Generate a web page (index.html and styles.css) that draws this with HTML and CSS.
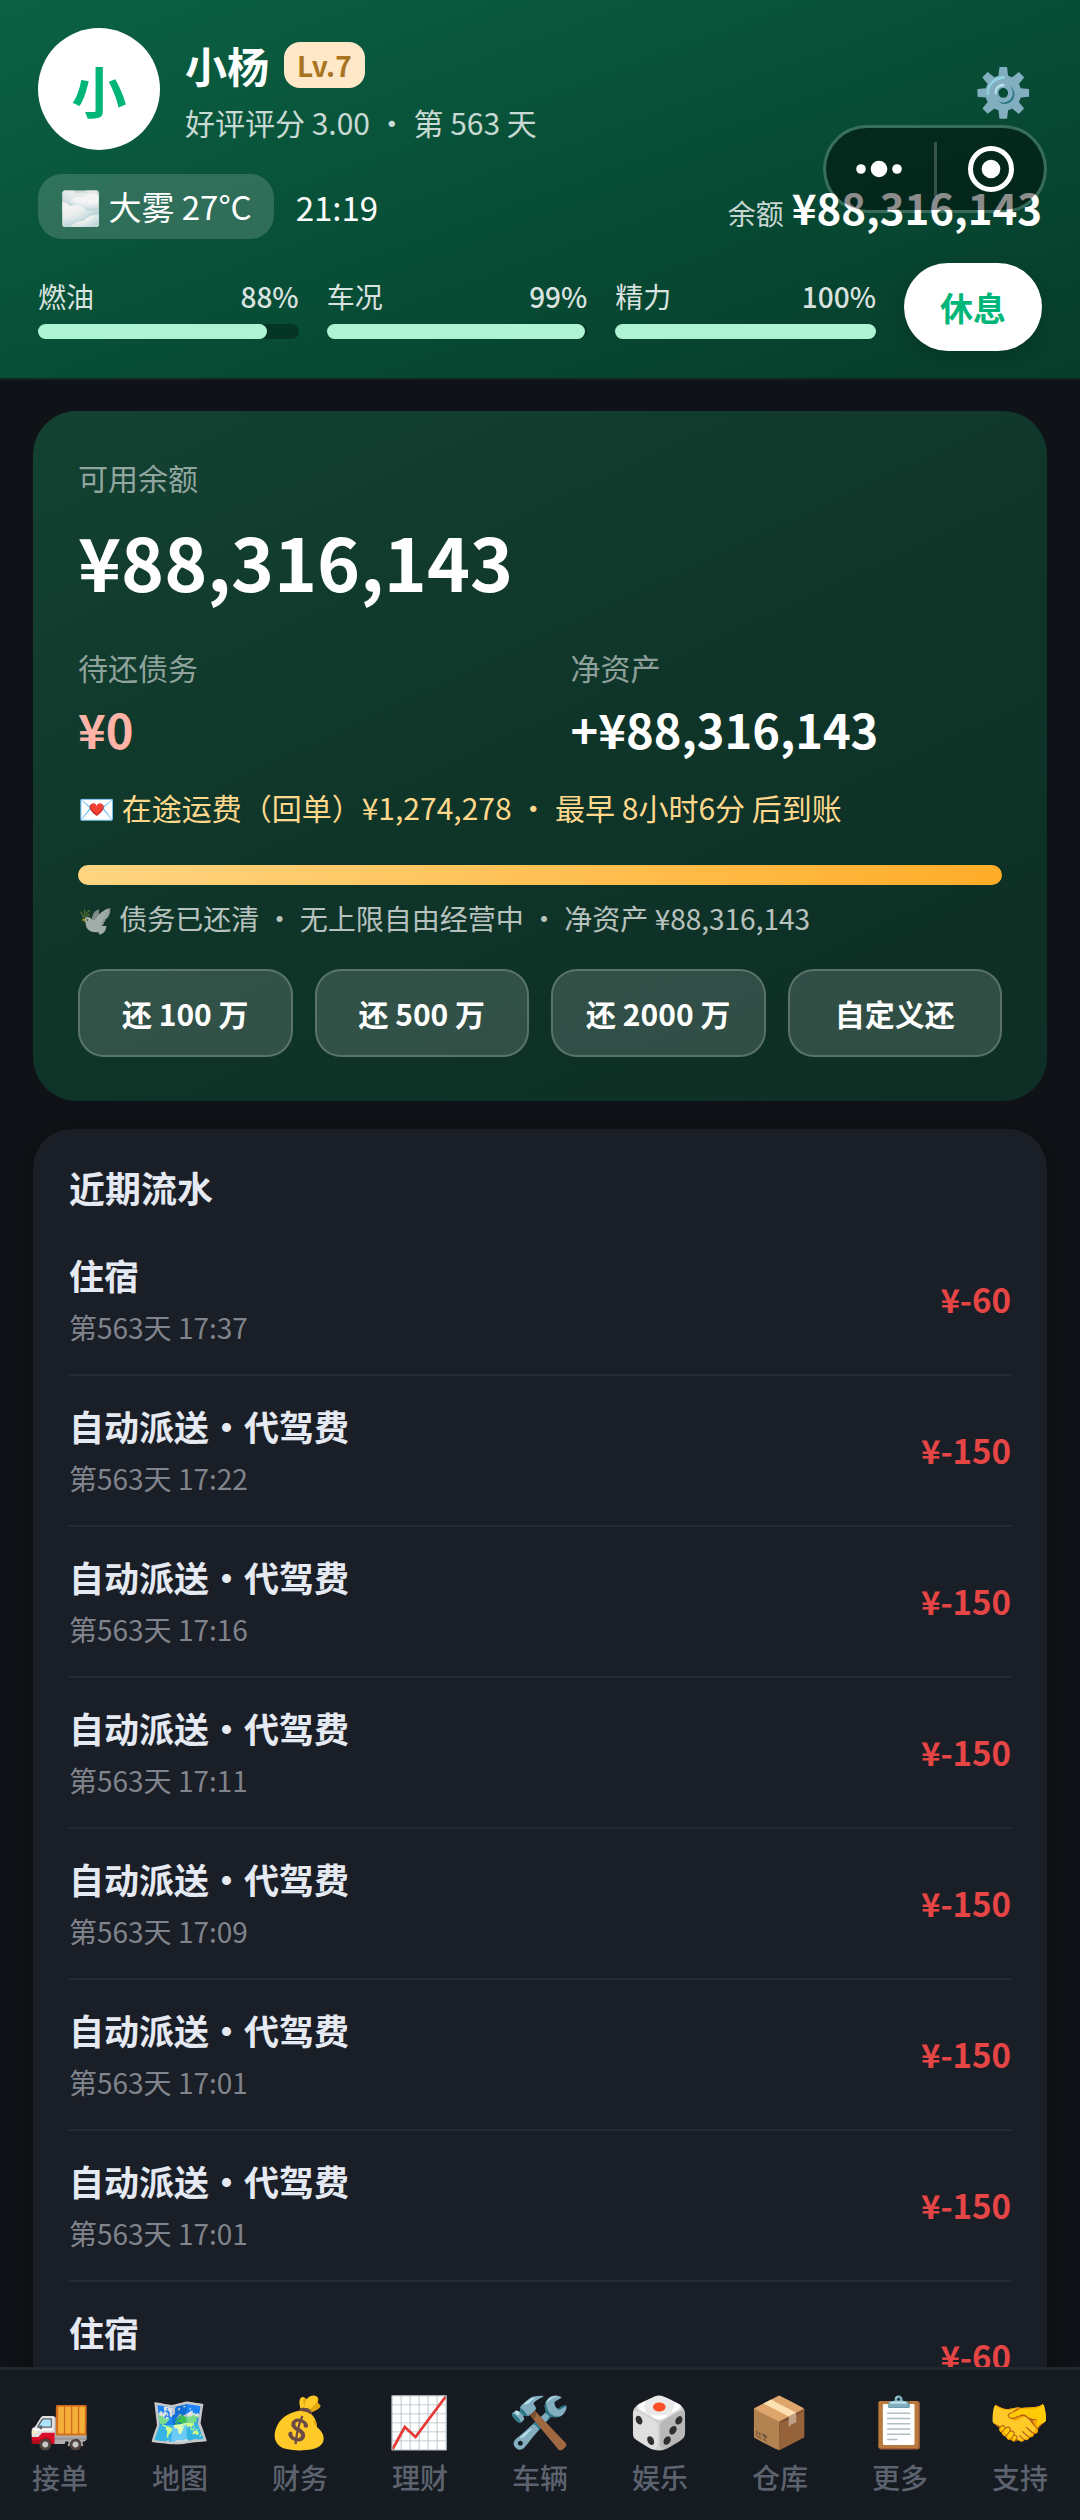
FILE: index.html
```html
<!DOCTYPE html>
<html lang="zh-CN">
<head>
<meta charset="utf-8">
<meta name="viewport" content="width=device-width, initial-scale=1">
<title>财务</title>
<link rel="stylesheet" href="styles.css">
</head>
<body>
<header class="header">
  <div class="profile">
    <div class="avatar">小</div>
    <div class="profile-info">
      <div class="name-row">
        <h1 class="name">小杨</h1>
        <span class="level">Lv.7</span>
      </div>
      <p class="rating">好评评分 3.00 · 第 563 天</p>
    </div>
    <button class="settings" type="button" aria-label="设置">⚙️</button>
  </div>
  <div class="status">
    <span class="weather">🌫️ 大雾 27°C</span>
    <time class="clock">21:19</time>
    <p class="balance"><span class="balance-label">余额</span> <strong class="balance-value">¥88,316,143</strong></p>
  </div>
  <div class="stats">
    <div class="stat">
      <div class="stat-head"><span>燃油</span><span class="stat-value">88%</span></div>
      <div class="track"><div class="fill" style="width: 88%"></div></div>
    </div>
    <div class="stat">
      <div class="stat-head"><span>车况</span><span class="stat-value">99%</span></div>
      <div class="track"><div class="fill" style="width: 99%"></div></div>
    </div>
    <div class="stat">
      <div class="stat-head"><span>精力</span><span class="stat-value">100%</span></div>
      <div class="track"><div class="fill" style="width: 100%"></div></div>
    </div>
    <button class="rest" type="button">休息</button>
  </div>
  <div class="capsule">
    <button class="capsule-button" type="button" aria-label="菜单">
      <svg width="48" height="48" viewBox="0 0 48 48" fill="#fff"><circle cx="5" cy="24" r="4.8"/><circle cx="23" cy="24" r="8.3"/><circle cx="41" cy="24" r="4.8"/></svg>
    </button>
    <span class="capsule-divider"></span>
    <button class="capsule-button" type="button" aria-label="关闭">
      <svg width="48" height="48" viewBox="0 0 48 48"><circle cx="25" cy="24" r="20.5" fill="none" stroke="#fff" stroke-width="5"/><circle cx="25" cy="24" r="9.3" fill="#fff"/></svg>
    </button>
  </div>
</header>

<main class="content">
  <section class="wallet">
    <p class="label">可用余额</p>
    <p class="total">¥88,316,143</p>
    <div class="columns">
      <div>
        <p class="label">待还债务</p>
        <p class="amount debt">¥0</p>
      </div>
      <div>
        <p class="label">净资产</p>
        <p class="amount">+¥88,316,143</p>
      </div>
    </div>
    <p class="transit">💌 在途运费（回单）¥1,274,278 · 最早 8小时6分 后到账</p>
    <div class="progress"></div>
    <p class="note">🕊️ 债务已还清 · 无上限自由经营中 · 净资产 ¥88,316,143</p>
    <div class="repay">
      <button class="repay-button" type="button">还 100 万</button>
      <button class="repay-button" type="button">还 500 万</button>
      <button class="repay-button" type="button">还 2000 万</button>
      <button class="repay-button" type="button">自定义还</button>
    </div>
  </section>

  <section class="history">
    <h2 class="history-title">近期流水</h2>
    <ul class="records">
      <li class="record"><div class="record-info"><p class="record-name">住宿</p><p class="record-time">第563天 17:37</p></div><span class="record-amount">¥-60</span></li>
      <li class="record"><div class="record-info"><p class="record-name">自动派送·代驾费</p><p class="record-time">第563天 17:22</p></div><span class="record-amount">¥-150</span></li>
      <li class="record"><div class="record-info"><p class="record-name">自动派送·代驾费</p><p class="record-time">第563天 17:16</p></div><span class="record-amount">¥-150</span></li>
      <li class="record"><div class="record-info"><p class="record-name">自动派送·代驾费</p><p class="record-time">第563天 17:11</p></div><span class="record-amount">¥-150</span></li>
      <li class="record"><div class="record-info"><p class="record-name">自动派送·代驾费</p><p class="record-time">第563天 17:09</p></div><span class="record-amount">¥-150</span></li>
      <li class="record"><div class="record-info"><p class="record-name">自动派送·代驾费</p><p class="record-time">第563天 17:01</p></div><span class="record-amount">¥-150</span></li>
      <li class="record"><div class="record-info"><p class="record-name">自动派送·代驾费</p><p class="record-time">第563天 17:01</p></div><span class="record-amount">¥-150</span></li>
      <li class="record"><div class="record-info"><p class="record-name">住宿</p></div><span class="record-amount">¥-60</span></li>
    </ul>
  </section>
</main>

<nav class="tabs">
  <a class="tab" href="#orders"><span class="tab-icon">🚚</span>接单</a>
  <a class="tab" href="#map"><span class="tab-icon">🗺️</span>地图</a>
  <a class="tab" href="#finance"><span class="tab-icon">💰</span>财务</a>
  <a class="tab" href="#invest"><span class="tab-icon">📈</span>理财</a>
  <a class="tab" href="#vehicle"><span class="tab-icon">🛠️</span>车辆</a>
  <a class="tab" href="#fun"><span class="tab-icon">🎲</span>娱乐</a>
  <a class="tab" href="#depot"><span class="tab-icon">📦</span>仓库</a>
  <a class="tab" href="#more"><span class="tab-icon">📋</span>更多</a>
  <a class="tab" href="#support"><span class="tab-icon">🤝</span>支持</a>
</nav>
</body>
</html>
```
FILE: styles.css
```css
* {
  box-sizing: border-box;
}

body {
  margin: 0;
  height: 100vh;
  display: flex;
  flex-direction: column;
  background: #0f1216;
  color: #fff;
  font-family: "Noto Sans CJK SC", sans-serif;
  font-size: 28px;
  line-height: 40px;
}

h1, h2, p, ul {
  margin: 0;
  padding: 0;
}

button {
  padding: 0;
  border: 0;
  background: none;
  color: inherit;
  font: inherit;
}

/* Header */
.header {
  position: relative;
  display: flex;
  flex-direction: column;
  gap: 24px;
  padding: 28px 38px 27px;
  border-bottom: 2px solid #14231f;
  background: linear-gradient(160deg, #0b6143 0%, #085038 45%, #063c2a 100%);
}

.profile {
  display: flex;
  align-items: center;
  gap: 25px;
}

.avatar {
  display: grid;
  place-items: center;
  width: 122px;
  height: 122px;
  border-radius: 50%;
  background: #fff;
  color: #00b578;
  font-size: 55px;
  font-weight: 700;
}

.profile-info {
  flex: 1;
  display: grid;
  gap: 12px;
  padding-top: 3px;
}

.name-row {
  display: flex;
  align-items: center;
  gap: 15px;
  height: 50px;
}

.name {
  font-size: 42px;
  line-height: 50px;
}

.level {
  padding: 3px 13px;
  border-radius: 16px;
  background: #ffe8c7;
  color: #a87422;
  font-weight: 700;
}

.rating {
  color: rgba(255, 255, 255, .78);
  font-size: 30px;
}

.settings {
  width: 78px;
  height: 78px;
  font-size: 47px;
}

.status {
  display: flex;
  align-items: center;
  gap: 22px;
  font-size: 33px;
}

.weather {
  padding: 8px 22px;
  border-radius: 24px;
  background: rgba(255, 255, 255, .16);
  line-height: 49px;
}

.balance {
  flex: 1;
  display: flex;
  align-items: baseline;
  justify-content: flex-end;
  gap: 8px;
}

.balance-label {
  color: rgba(255, 255, 255, .8);
  font-size: 28px;
  line-height: 28px;
}

.balance-value {
  font-size: 42px;
  line-height: 48px;
}

.stats {
  display: flex;
  align-items: center;
  gap: 28px;
}

.stat {
  flex: 1;
  display: grid;
  gap: 8px;
  color: rgba(255, 255, 255, .86);
}

.stat-head {
  display: flex;
  justify-content: space-between;
}

.stat-value {
  font-weight: 500;
}

.track {
  height: 15px;
  border-radius: 8px;
  background: rgba(0, 0, 0, .3);
}

.fill {
  height: 100%;
  border-radius: 8px;
  background: #aef3d3;
}

.rest {
  width: 138px;
  height: 88px;
  border-radius: 44px;
  background: #fff;
  box-shadow: 0 6px 16px rgba(0, 0, 0, .15);
  color: #00b578;
  font-size: 33px;
  font-weight: 700;
}

/* Host app controls, floating over the header */
.capsule {
  position: absolute;
  top: 125px;
  right: 33px;
  display: flex;
  align-items: center;
  width: 224px;
  height: 88px;
  border: 3px solid rgba(255, 255, 255, .2);
  border-radius: 44px;
  background: rgba(0, 0, 0, .45);
  background-clip: padding-box;
}

.capsule-button {
  flex: 1;
  display: grid;
  place-items: center;
}

.capsule-divider {
  width: 3px;
  height: 55px;
  background: rgba(255, 255, 255, .2);
}

/* Scrolling content */
.content {
  flex: 1;
  min-height: 0;
  overflow-y: auto;
  scrollbar-width: none;
  display: flex;
  flex-direction: column;
  gap: 28px;
  padding: 31px 33px;
}

.wallet {
  flex: none;
  padding: 44px 45px;
  border-radius: 44px;
  background: linear-gradient(155deg, #134232 0%, #0f3529 50%, #0d2e24 100%);
}

.label {
  color: rgba(255, 255, 255, .55);
  font-size: 30px;
  line-height: 44px;
}

.total {
  margin: 13px 0 37px;
  font-size: 73px;
  font-weight: 700;
  line-height: 96px;
}

.columns {
  display: grid;
  grid-template-columns: 1fr 1fr;
  gap: 61px;
}

.amount {
  margin-top: 6px;
  font-size: 47px;
  font-weight: 700;
  line-height: 68px;
}

.debt {
  color: #ffb3a7;
}

.transit {
  margin: 22px 0 36px;
  color: #ffd88c;
  font-size: 30px;
  line-height: 44px;
}

.progress {
  height: 20px;
  border-radius: 10px;
  background: linear-gradient(90deg, #ffd582, #ffad29);
}

.note {
  margin: 13px 0 31px;
  opacity: .7;
}

.repay {
  display: grid;
  grid-template-columns: repeat(4, 1fr);
  gap: 22px;
}

.repay-button {
  height: 88px;
  border: 2px solid rgba(255, 255, 255, .2);
  border-radius: 26px;
  background: rgba(255, 255, 255, .15);
  font-size: 30px;
  font-weight: 700;
}

.history {
  flex: none;
  padding: 32px 36px;
  border-radius: 39px;
  background: #1a1e26;
  box-shadow: 0 6px 24px rgba(0, 0, 0, .3);
  color: #e5e9f2;
}

.history-title {
  margin-bottom: 12px;
  font-size: 36px;
  line-height: 52px;
}

.records {
  list-style: none;
}

.record {
  display: flex;
  align-items: center;
  justify-content: space-between;
  min-height: 151px;
  padding: 25px 0 27px;
  border-bottom: 2px solid #262a33;
}

.record-info {
  align-self: flex-start;
}

.record-name {
  font-size: 35px;
  font-weight: 700;
  line-height: 50px;
}

.record-time {
  margin-top: 7px;
  color: #80848d;
}

.record-amount {
  color: #e64545;
  font-size: 33px;
  font-weight: 700;
}

/* Bottom tabs */
.tabs {
  position: relative;
  display: grid;
  grid-template-columns: repeat(9, 1fr);
  padding: 23px 0;
  border-top: 3px solid #22262e;
  background: #161a21;
}

.tab {
  display: grid;
  gap: 4px;
  justify-items: center;
  color: #5c636e;
  font-weight: 500;
  text-decoration: none;
}

.tab-icon {
  font-family: "Noto Color Emoji", sans-serif;
  font-size: 50px;
  font-weight: 400;
  line-height: 60px;
}
```
